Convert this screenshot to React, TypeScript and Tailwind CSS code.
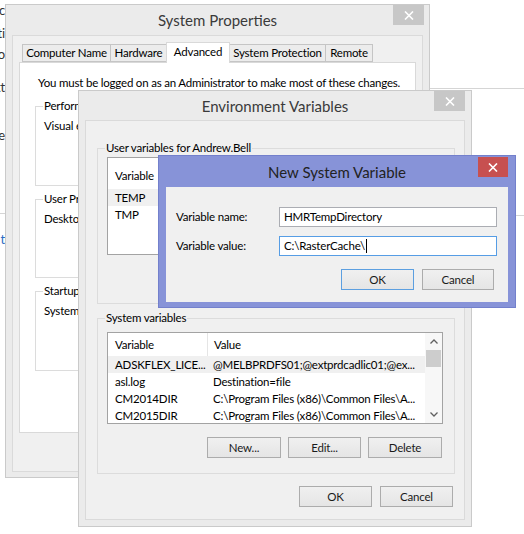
import React from 'react';

const CloseGlyph = () => (
    <svg width="10" height="9" viewBox="0 0 10 9" className="block">
        <path d="M1 0.5 L9 8.5 M9 0.5 L1 8.5" stroke="#ffffff" strokeWidth="1.6" fill="none" />
    </svg>
);

const Chevron = ({ up }: { up?: boolean }) => (
    <svg width="8" height="5" viewBox="0 0 8 5" className="block">
        <path d={up ? 'M0.5 4.5 L4 1 L7.5 4.5' : 'M0.5 0.5 L4 4 L7.5 0.5'} stroke="#606060" strokeWidth="1.3" fill="none" />
    </svg>
);

const Button = ({ label, width, primary }: { label: string; width: string; primary?: boolean }) => (
    <div
        className={`${width} h-[21px] shrink-0 flex items-center justify-center border bg-gradient-to-b from-[#f0f0f0] to-[#e5e5e5] text-[#1a1a1a] ${primary ? 'border-[#5c9fe0]' : 'border-[#acacac]'}`}
    >
        {label}
    </div>
);

const Group = ({ label, className, children }: { label: string; className: string; children?: React.ReactNode }) => (
    <fieldset className={`border border-[#dcdcdc] ${className}`}>
        <legend className="ml-[7px] px-[1px] leading-[16px] whitespace-nowrap">{label}</legend>
        {children}
    </fieldset>
);

const Tab = ({ label, width, active }: { label: string; width: string; active?: boolean }) =>
    active ? (
        <div className={`${width} h-[21px] -ml-px shrink-0 relative z-10 bg-white border border-b-0 border-[#d9d9d9] flex items-start justify-center pt-[1px] whitespace-nowrap`}>
            {label}
        </div>
    ) : (
        <div className={`${width} h-[18px] mb-px -ml-px first:ml-0 shrink-0 bg-[#ececec] border border-[#c5c5c5] flex items-center justify-center whitespace-nowrap`}>
            {label}
        </div>
    );

const systemRows = [
    ['ADSKFLEX_LICE...', '@MELBPRDFS01;@extprdcadlic01;@ex...'],
    ['asl.log', 'Destination=file'],
    ['CM2014DIR', 'C:\\Program Files (x86)\\Common Files\\A...'],
    ['CM2015DIR', 'C:\\Program Files (x86)\\Common Files\\A...'],
];

export default function App() {
    return (
        <div className="relative w-[524px] h-[534px] bg-white overflow-hidden font-['Lato',sans-serif] text-[11.5px] tracking-[-0.2px] leading-[16px] text-black">
            {/* page behind the windows */}
            <div className="absolute left-0 top-0 w-[5px] h-[260px] overflow-hidden text-[13px] text-[#333]">
                <div className="absolute right-0 top-[2px]">c</div>
                <div className="absolute right-0 top-[25px]">ti</div>
                <div className="absolute right-0 top-[46px]">o</div>
                <div className="absolute right-0 top-[79px]">tt</div>
                <div className="absolute right-0 top-[127px]">e</div>
                <div className="absolute left-0 top-[213px] w-[5px] h-px bg-[#d5d5d5]" />
                <div className="absolute right-0 top-[231px] text-[#2a6cc4]">t</div>
            </div>
            <div className="absolute left-[430px] top-[88px] w-[94px] h-px bg-[#d5d5d5]" />
            <div className="absolute left-[516px] top-[215px] w-[8px] h-px bg-[#d5d5d5]" />

            {/* System Properties */}
            <div className="absolute left-[5px] top-[4px] w-[425px] h-[474px] bg-[#ebebeb] border border-[#cacaca] flex flex-col">
                <div className="relative h-[30px] flex items-center justify-center text-[15px] tracking-normal text-[#3a3a3a]">
                    System Properties
                    <div className="absolute right-[5px] top-0 w-[31px] h-[20px] bg-[#c7c7c7] flex items-center justify-center">
                        <CloseGlyph />
                    </div>
                </div>
                <div className="mx-[6px] h-[437px] bg-[#f0f0f0] border border-[#dadada] flex flex-col">
                    <div className="mt-[6px] ml-[9px] h-[21px] -mb-px flex items-end">
                        <Tab label="Computer Name" width="w-[89px]" />
                        <Tab label="Hardware" width="w-[57px]" />
                        <Tab label="Advanced" width="w-[64px]" active />
                        <Tab label="System Protection" width="w-[97px]" />
                        <Tab label="Remote" width="w-[48px]" />
                    </div>
                    <div className="ml-[6px] w-[397px] h-[371px] bg-white border border-[#d9d9d9] pt-[12px] overflow-hidden">
                        <p className="pl-[18px] whitespace-nowrap">You must be logged on as an Administrator to make most of these changes.</p>
                        <Group label="Performance" className="mt-[7px] ml-[15px] w-[362px] h-[88px]">
                            <p className="pt-[4px] pl-[8px] whitespace-nowrap">Visual effects, processor scheduling, memory usage and virtual memory</p>
                        </Group>
                        <Group label="User Profiles" className="mt-[5px] ml-[15px] w-[362px] h-[87px]">
                            <p className="pt-[4px] pl-[8px] whitespace-nowrap">Desktop settings related to your sign-in</p>
                        </Group>
                        <Group label="Startup and Recovery" className="mt-[5px] ml-[15px] w-[362px] h-[88px]">
                            <p className="pt-[4px] pl-[8px] whitespace-nowrap">System startup, system failure, and debugging information</p>
                        </Group>
                    </div>
                </div>
            </div>

            {/* Environment Variables */}
            <div className="absolute left-[78px] top-[90px] w-[394px] h-[437px] bg-[#ebebeb] border border-[#cacaca] flex flex-col">
                <div className="relative h-[29px] flex items-center justify-center text-[15px] tracking-normal text-[#3a3a3a]">
                    Environment Variables
                    <div className="absolute right-[6px] top-0 w-[31px] h-[20px] bg-[#c7c7c7] flex items-center justify-center">
                        <CloseGlyph />
                    </div>
                </div>
                <div className="mx-[6px] h-[400px] bg-[#f0f0f0] border border-[#dadada] flex flex-col">
                    <Group label="User variables for Andrew.Bell" className="mt-[19px] ml-[11px] w-[358px] h-[164px]">
                        <div className="mt-px ml-[9px] w-[338px] h-[98px] bg-white border border-[#a3a3a3] overflow-hidden">
                            <div className="h-[31px] flex items-end pb-[5px]">
                                <div className="w-[99px] shrink-0 pl-[7px]">Variable</div>
                                <div className="pl-[6px] border-l border-[#e5e5e5]">Value</div>
                            </div>
                            <div className="h-[17px] flex items-center bg-[#f0f0f0] pl-[7px]">TEMP</div>
                            <div className="h-[17px] flex items-center pl-[7px]">TMP</div>
                        </div>
                        <div className="mt-[8px] pr-[12px] flex justify-end gap-[7px]">
                            <Button label="New..." width="w-[74px]" />
                            <Button label="Edit..." width="w-[73px]" />
                            <Button label="Delete" width="w-[73px]" />
                        </div>
                    </Group>
                    <Group label="System variables" className="mt-[6px] ml-[11px] w-[358px] h-[164px]">
                        <div className="mt-[6px] ml-[9px] w-[336px] h-[92px] bg-white border border-[#a3a3a3] flex overflow-hidden">
                            <div className="flex-1 min-w-0 overflow-hidden whitespace-nowrap">
                                <div className="h-[23px] flex">
                                    <div className="w-[99px] shrink-0 pl-[7px] flex items-center">Variable</div>
                                    <div className="pl-[6px] flex items-center border-l border-[#e5e5e5]">Value</div>
                                </div>
                                {systemRows.map(([name, value], i) => (
                                    <div key={name} className={`h-[17px] flex items-center ${i === 0 ? 'bg-[#f0f0f0]' : ''}`}>
                                        <div className="w-[99px] shrink-0 pl-[7px] overflow-hidden">{name}</div>
                                        <div className="pl-[6px]">{value}</div>
                                    </div>
                                ))}
                            </div>
                            <div className="w-[17px] shrink-0 flex flex-col items-center bg-[#f7f7f7]">
                                <div className="h-[17px] flex items-center justify-center">
                                    <Chevron up />
                                </div>
                                <div className="w-[15px] h-[17px] bg-[#cdcdcd]" />
                                <div className="flex-1" />
                                <div className="h-[17px] flex items-center justify-center">
                                    <Chevron />
                                </div>
                            </div>
                        </div>
                        <div className="mt-[13px] pr-[12px] flex justify-end gap-[7px]">
                            <Button label="New..." width="w-[74px]" />
                            <Button label="Edit..." width="w-[73px]" />
                            <Button label="Delete" width="w-[74px]" />
                        </div>
                    </Group>
                    <div className="mt-[12px] pr-[11px] flex justify-end gap-[8px]">
                        <Button label="OK" width="w-[73px]" />
                        <Button label="Cancel" width="w-[73px]" />
                    </div>
                </div>
            </div>

            {/* New System Variable */}
            <div className="absolute left-[158px] top-[155px] w-[358px] h-[153px] bg-[#8793d8] border border-[#7380cc] flex flex-col">
                <div className="relative h-[31px] flex items-center justify-center text-[15px] tracking-normal text-[#222]">
                    New System Variable
                    <div className="absolute right-[7px] top-px w-[30px] h-[20px] bg-[#c75050] flex items-center justify-center">
                        <CloseGlyph />
                    </div>
                </div>
                <div className="mx-[7px] h-[115px] bg-[#f0f0f0] pt-[20px] pl-[10px]">
                    <div className="flex items-center">
                        <div className="w-[103px] shrink-0">Variable name:</div>
                        <div className="w-[218px] h-[20px] bg-white border border-[#abadb3] pl-[4px] flex items-center">HMRTempDirectory</div>
                    </div>
                    <div className="mt-[9px] flex items-center">
                        <div className="w-[103px] shrink-0">Variable value:</div>
                        <div className="w-[218px] h-[20px] bg-white border border-[#569de5] pl-[4px] flex items-center">
                            C:\RasterCache\
                            <span className="ml-px w-px h-[14px] bg-black" />
                        </div>
                    </div>
                    <div className="mt-[13px] pr-[14px] flex justify-end gap-[8px]">
                        <Button label="OK" width="w-[73px]" primary />
                        <Button label="Cancel" width="w-[72px]" />
                    </div>
                </div>
            </div>
        </div>
    );
}
